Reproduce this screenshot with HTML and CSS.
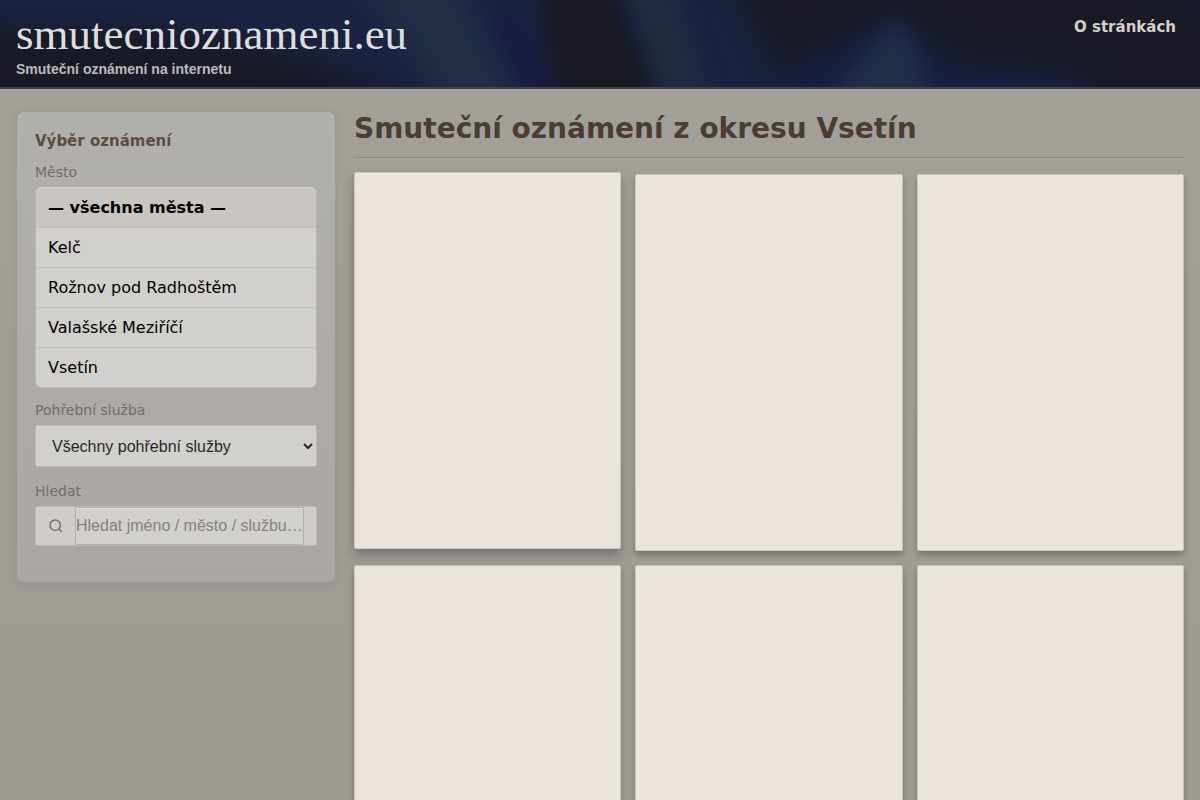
FILE: index.html
```html
<!DOCTYPE html>
<html lang="cs">
<head>
<meta charset="utf-8">
<meta name="viewport" content="width=device-width, initial-scale=1">
<title>Smuteční oznámení z okresu Vsetín</title>
<link rel="stylesheet" href="styles.css">
</head>
<body>
<header class="site-header">
  <svg class="header-art" viewBox="0 0 1200 88" preserveAspectRatio="none" aria-hidden="true">
    <defs>
      <filter id="soft" x="-50%" y="-50%" width="200%" height="200%" color-interpolation-filters="sRGB"><feGaussianBlur stdDeviation="15"/></filter>
      <filter id="edge" x="-50%" y="-50%" width="200%" height="200%" color-interpolation-filters="sRGB"><feGaussianBlur stdDeviation="10"/></filter>
    </defs>
    <rect width="1200" height="88" fill="#191a26"/>
    <g filter="url(#soft)">
      <path d="M-40-40H540L560 120H460L340 70 200 35-40 25Z" fill="#1a2342"/>
      <path d="M340-40H450L530 130H460L410 50Z" fill="#212e46"/>
      <path d="M600-40H720L800 120H670Z" fill="#192340"/>
      <path d="M780 70 900 15 950 60 1090 80V120H780Z" fill="#182040"/>
      <path d="M1130-40H1240V25Z" fill="#1a1b3c"/>
    </g>
    <g filter="url(#edge)">
      <path d="M490 10 505 10 565 110H538Z" fill="#1a1840"/>
      <path d="M542-30H596L655 120H572Z" fill="#1a1a22"/>
      <path d="M620-30H668L715 120H672Z" fill="#212c42"/>
      <path d="M815 120 868 50 895 24 915 45 938 120Z" fill="#202e48"/>
    </g>
  </svg>
  <div class="brand">
    <a class="brand-name" href="#">smutecnioznameni.eu</a>
    <p class="brand-tagline">Smuteční oznámení na internetu</p>
  </div>
  <nav class="site-nav"><a class="nav-link" href="#">O stránkách</a></nav>
</header>
<div class="layout">
  <aside class="filters">
    <h2 class="filters-title">Výběr oznámení</h2>
    <p class="field-label" id="city-label">Město</p>
    <nav class="city-list" aria-labelledby="city-label">
      <a class="city city-active" href="#">— všechna města —</a>
      <a class="city" href="#">Kelč</a>
      <a class="city" href="#">Rožnov pod Radhoštěm</a>
      <a class="city" href="#">Valašské Meziříčí</a>
      <a class="city" href="#">Vsetín</a>
    </nav>
    <label class="field-label" for="service">Pohřební služba</label>
    <select class="service-select" id="service"><option>Všechny pohřební služby</option></select>
    <label class="field-label" for="search">Hledat</label>
    <div class="search">
      <svg class="search-icon" viewBox="0 0 16 16" aria-hidden="true"><circle cx="7.2" cy="7.2" r="5.2"/><path d="M11 11 13.4 13.4"/></svg>
      <input class="search-input" id="search" type="text" placeholder="Hledat jméno / město / službu…">
    </div>
  </aside>
  <main class="content">
    <h1 class="page-title">Smuteční oznámení z okresu Vsetín</h1>
    <div class="notices">
      <a class="notice notice-raised" href="#" aria-label="Oznámení 1"></a>
      <a class="notice" href="#" aria-label="Oznámení 2"></a>
      <a class="notice" href="#" aria-label="Oznámení 3"></a>
      <a class="notice" href="#" aria-label="Oznámení 4"></a>
      <a class="notice" href="#" aria-label="Oznámení 5"></a>
      <a class="notice" href="#" aria-label="Oznámení 6"></a>
    </div>
  </main>
</div>
</body>
</html>
```
FILE: styles.css
```css
* { box-sizing: border-box; }

body {
  margin: 0;
  background: linear-gradient(#a3a09a, #9e9a94 800px);
  color: #4a3d31;
  font-family: "DejaVu Sans", sans-serif;
  font-size: 16px;
}

a { text-decoration: none; }

.site-header {
  position: relative;
  display: flex;
  justify-content: space-between;
  align-items: flex-start;
  padding: 8px 16px;
  border-bottom: 2px solid #41414f;
  background: #191a26;
}

.header-art {
  position: absolute;
  inset: 0;
  width: 100%;
  height: 100%;
}

.brand,
.site-nav { position: relative; }

.brand-name {
  display: block;
  color: #dededd;
  font-family: "Liberation Serif", serif;
  font-size: 45px;
  line-height: 52px;
}

.brand-tagline {
  margin: 0;
  color: #bdbcb9;
  font: bold 14px/19px "Liberation Sans", sans-serif;
}

.nav-link {
  display: block;
  padding: 8px;
  color: #d6cfc8;
  font-size: 15px;
  font-weight: bold;
  line-height: 22px;
}

.layout {
  display: grid;
  grid-template-columns: 320px 1fr;
  align-items: start;
  gap: 18px;
  padding: 22px 16px;
}

.filters {
  padding: 18px;
  padding-bottom: 36px;
  border: 1px solid #9d9a95;
  border-radius: 8px;
  background: linear-gradient(#b2b0ac, #aaa7a3);
  box-shadow: 0 2px 6px rgba(0, 0, 0, 0.08);
}

.filters-title {
  margin: 0 0 10px;
  color: #5a4d42;
  font-size: 15px;
  line-height: 22px;
}

.field-label {
  display: block;
  margin: 0 0 5px;
  color: #756b66;
  font-size: 14px;
  line-height: 20px;
}

.city-list {
  margin-bottom: 12px;
  overflow: hidden;
  border: 1px solid #bbb8b4;
  border-top-color: #d5d3cf;
  border-radius: 7px;
  background: #d1d0cc;
}

.city {
  display: block;
  padding: 9px 12px;
  border-bottom: 1px solid #bfbdb8;
  color: #000;
  line-height: 21px;
}

.city:last-child { border-bottom: 0; }

.city-active {
  background: #c9c5c1;
  font-weight: bold;
}

.service-select {
  display: block;
  width: 100%;
  height: 42px;
  margin-bottom: 14px;
  padding: 0 0 0 12px;
  border: 1px solid #bbb8b4;
  border-radius: 2px;
  background: #d1d0cc;
  box-shadow: inset 0 1px #dddcd9;
  color: #282828;
  font: 16px "Liberation Sans", sans-serif;
}

.search {
  display: flex;
  align-items: center;
  height: 40px;
  padding: 0 12px;
  border: 1px solid #bbb8b4;
  border-radius: 2px;
  background: #cfcdca;
}

.search-icon {
  flex: none;
  width: 16px;
  height: 16px;
  margin-right: 11px;
  fill: none;
  stroke: #756b66;
  stroke-width: 1.4;
  stroke-linecap: round;
}

.search-input {
  flex: 1;
  min-width: 0;
  height: 38px;
  padding: 0;
  border: 1px solid #b3b0ac;
  border-radius: 2px;
  background: #d1d0cc;
  box-shadow: inset 0 1px #dddcd9;
  color: #282828;
  font: 16px "Liberation Sans", sans-serif;
}

.search-input::placeholder { color: #88817d; }

.page-title {
  margin: 0 0 16px;
  padding-bottom: 10px;
  border-bottom: 1px solid #8d8983;
  font-size: 28px;
  line-height: 36px;
}

.notices {
  display: grid;
  grid-template-columns: repeat(3, 1fr);
  gap: 14px;
}

.notice {
  aspect-ratio: 100 / 141;
  border: 1px solid #c9c6bf;
  border-radius: 2px;
  background: #ebe3dd;
  box-shadow: 0 4px 6px rgba(0, 0, 0, 0.26);
}

.notice-raised {
  box-shadow: 0 6px 12px rgba(0, 0, 0, 0.26);
  transform: translateY(-2px);
}
```
